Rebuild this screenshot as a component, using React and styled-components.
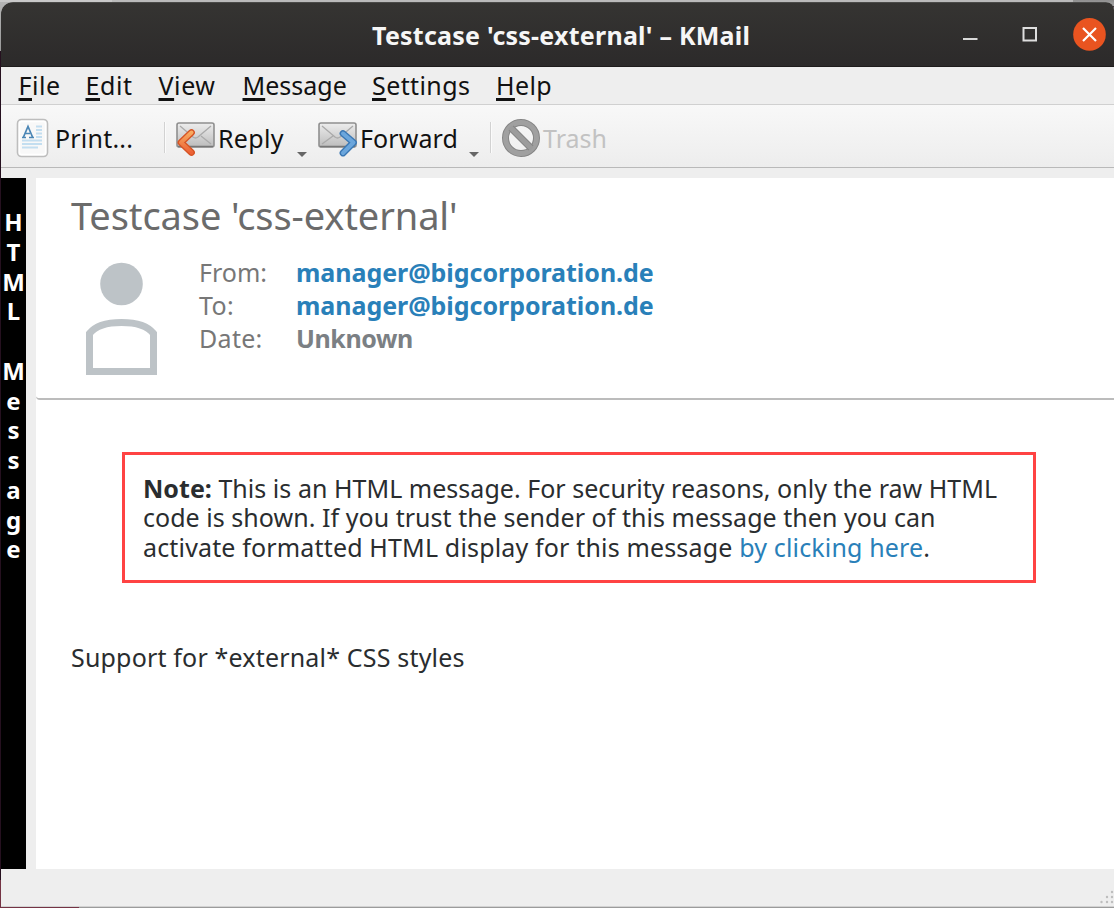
import React from "react";
import styled, { createGlobalStyle } from "styled-components";

const Global = createGlobalStyle`
  * { box-sizing: border-box; }
  body { margin: 0; background: #25101f; overflow: hidden; }
`;

const Desktop = styled.div`
  width: 1114px;
  height: 908px;
  padding: 2px 0 0 1px;
  overflow: hidden;
  font: 25px "Noto Sans", "Open Sans", sans-serif;
  color: #111;
  background:
    linear-gradient(#c9c9c9, #c9c9c9) 0 0 / 112px 2px no-repeat,
    linear-gradient(#bababa, #bababa) 112px 0 / 961px 2px no-repeat,
    linear-gradient(#8f8f8f, #a5a5a5) 1073px 0 / 41px 6px no-repeat,
    linear-gradient(#b5b5b5, #9a9a9a) 0 0 / 14px 51px no-repeat,
    linear-gradient(#743344, #743344) 0 880px / 79px 28px no-repeat,
    linear-gradient(#9b9b9b, #9b9b9b) 79px 907px / 1035px 1px no-repeat,
    #25101f;
`;

const Window = styled.div`
  display: flex;
  flex-direction: column;
  height: 905px;
  border-radius: 12px 8px 0 0;
  overflow: hidden;
  background: #eeeeee;
  border-bottom: 1px solid #d2d2d2;
`;

const TitleBar = styled.header`
  flex: none;
  height: 65px;
  display: grid;
  grid-template-columns: 1fr auto;
  align-items: center;
  padding-right: 8px;
  background: linear-gradient(#353432, #2c2a2a);
  border-top: 1px solid #4a4a48;
  border-bottom: 1px solid #1e1c1c;
`;

const Title = styled.h1`
  margin: 0 0 0 371px;
  font-size: 25px;
  line-height: 34px;
  font-weight: 700;
  letter-spacing: ${(p) => p.$track}px;
  color: #f6f6f6;
  white-space: nowrap;
`;

const Controls = styled.div`
  display: flex;
  svg { display: block; }
`;

const MenuBar = styled.nav`
  flex: none;
  display: flex;
  height: 38px;
  padding-left: 17.5px;
  background: #eeeeee;
  border-bottom: 1px solid #d0d0d0;
`;

const MenuItem = styled.span`
  width: ${(p) => p.$width}px;
  line-height: 36px;
  letter-spacing: ${(p) => p.$track || 0}px;
  white-space: nowrap;
`;

const Mnemonic = styled.span`
  text-decoration: underline 3px;
  text-underline-offset: 2.5px;
  text-decoration-skip-ink: none;
`;

const ToolBar = styled.div`
  flex: none;
  display: flex;
  height: 63px;
  padding-left: 15px;
  background: linear-gradient(#f8f8f8, #ededed);
  border-bottom: 1px solid #b9b9b9;
`;

const ToolButton = styled.div`
  width: ${(p) => p.$width}px;
  display: flex;
  align-items: center;
  color: ${(p) => (p.$disabled ? "#c2c2c2" : "#111")};
  svg { flex: none; display: block; margin-top: 3px; }
`;

const ToolLabel = styled.span`
  line-height: 34px;
  width: ${(p) => p.$width}px;
  padding-top: 3px;
  margin-left: ${(p) => p.$gap}px;
  letter-spacing: ${(p) => p.$track || 0}px;
  white-space: nowrap;
`;

const Arrow = styled.i`
  align-self: flex-end;
  margin-bottom: 10px;
  border: 5px solid transparent;
  border-top-color: #666;
  border-bottom: 0;
`;

const Divider = styled.i`
  width: 1px;
  height: 31px;
  margin: 17px ${(p) => p.$after}px 0 0;
  background: #d2d2d2;
  box-shadow: 1px 0 #fbfbfb;
`;

const Main = styled.main`
  flex: none;
  display: flex;
  height: 691px;
  margin-top: 10px;
`;

const FormatBar = styled.aside`
  width: 25px;
  margin-right: 10px;
  padding-top: 29px;
  background: #000;
  color: #fff;
  font-weight: 700;
  font-size: 24px;
  line-height: 29.75px;
  text-align: center;
`;

const Letter = styled.div`
  height: 29.75px;
  display: flex;
  justify-content: center;
`;

const Viewer = styled.section`
  flex: 1;
  background: #fff;
`;

const MessageHeader = styled.div`
  height: 222px;
  padding: 15px 0 0 35px;
  border-bottom: 2px solid #bcbcbc;
  border-bottom-left-radius: 4px;
`;

const Subject = styled.h2`
  margin: 0;
  font-size: 38px;
  line-height: 44px;
  font-weight: 400;
  letter-spacing: ${(p) => p.$track}px;
  color: #6b6b6b;
`;

const Details = styled.div`
  display: flex;
  padding: 19px 0 0 15px;
  svg { display: block; margin-top: 6px; }
`;

const Fields = styled.dl`
  display: grid;
  grid-template-columns: 97px auto;
  grid-auto-rows: 33.2px;
  margin: 0 0 0 42px;
  line-height: 33px;
`;

const FieldName = styled.dt`
  color: #777;
  letter-spacing: ${(p) => p.$track || 0}px;
`;

const FieldValue = styled.dd`
  margin: 0;
  font-weight: 700;
  letter-spacing: ${(p) => p.$track || 0}px;
  color: ${(p) => (p.$muted ? "#7b8084" : "#2980b9")};
`;

const Notice = styled.div`
  width: 914px;
  height: 131px;
  margin: 52px 0 0 86px;
  padding: 18.5px 0 0 18px;
  border: 3px solid #ff4343;
`;

const Line = styled.div`
  height: 29.7px;
  line-height: 29.7px;
  letter-spacing: ${(p) => p.$track || 0}px;
  color: #2a2d2f;
  white-space: nowrap;
`;

const Link = styled.a`
  color: #2980b9;
`;

const Body = styled.div`
  padding: 60px 0 0 35px;
`;

const StatusBar = styled.footer`
  flex: 1;
  display: flex;
  justify-content: flex-end;
  align-items: flex-end;
  svg { display: block; }
`;

const menus = [
  ["File", 67, 0.5],
  ["Edit", 73, 0.6],
  ["View", 84, 0.6],
  ["Message", 129.5, 0],
  ["Settings", 124, 0.4],
  ["Help", 60, 0.4],
];

const PrintIcon = () => (
  <svg width="33" height="40" viewBox="0 0 33 40">
    <rect x="1.5" y="1.5" width="30" height="37" rx="4" fill="#f8f8f8" stroke="#bdbdbd" strokeWidth="1.6" />
    <rect x="3.5" y="3.5" width="26" height="33" rx="2" fill="none" stroke="#fff" strokeWidth="1.5" />
    <path d="M6 19.500h4M13 19.500h5M7.500 19L12 8.500L16.500 19M9 15.500h5" fill="none" stroke="#4b86b5" strokeWidth="1.7" />
    <path d="M20 8.500h6M20 12h6M20 15.500h6M20 19h6M6 22.500h20M6 26h20M6 29.500h16" stroke="#c3def0" strokeWidth="2" />
  </svg>
);

const Envelope = () => (
  <>
    <rect x="1" y="4" width="37" height="24" rx="2" fill="url(#paper)" stroke="#8f8f8f" strokeWidth="1.6" />
    <path d="M4 25L15 17M35 25L25 17M4 7l13 11q2.500 2 5 0L35 7" fill="none" stroke="#aaa" strokeWidth="1.3" />
    <path d="M2 27.500h35" stroke="#777" strokeWidth="1.3" />
    <defs>
      <linearGradient id="paper" x2="0" y2="1"><stop stopColor="#ededed" /><stop offset="1" stopColor="#bcbcbc" /></linearGradient>
      <linearGradient id="ember" x2="0" y2="1"><stop stopColor="#f8a95f" /><stop offset="1" stopColor="#ec6236" /></linearGradient>
    </defs>
  </>
);

const ReplyIcon = () => (
  <svg width="40" height="38" viewBox="0 0 40 38">
    <Envelope />
    <path d="M15.500 13.500L5 23.500L15.500 33.500" fill="none" stroke="#d65425" strokeWidth="6.800" strokeLinecap="round" strokeLinejoin="round" />
    <path d="M15.500 13.500L5 23.500L15.500 33.500" fill="none" stroke="url(#ember)" strokeWidth="4" strokeLinecap="round" strokeLinejoin="round" />
  </svg>
);

const ForwardIcon = () => (
  <svg width="40" height="38" viewBox="0 0 40 38">
    <Envelope />
    <path d="M25 14.500L35.500 23.500L25 34" fill="none" stroke="#3b78b4" strokeWidth="6.800" strokeLinecap="round" strokeLinejoin="round" />
    <path d="M25 14.500L35.500 23.500L25 34" fill="none" stroke="#6ba6dc" strokeWidth="4" strokeLinecap="round" strokeLinejoin="round" />
  </svg>
);

const TrashIcon = () => (
  <svg width="40" height="40" viewBox="0 0 40 40">
    <circle cx="20" cy="20" r="15.500" fill="none" stroke="#858585" strokeWidth="7" />
    <circle cx="20" cy="20" r="15.500" fill="none" stroke="#a0a0a0" strokeWidth="5" />
    <path d="M10 10L30 30" stroke="#858585" strokeWidth="7" />
    <path d="M9 9L31 31" stroke="#9c9c9c" strokeWidth="5" />
  </svg>
);

const Avatar = () => (
  <svg width="71" height="114" viewBox="0 0 71 114">
    <circle cx="35.500" cy="22" r="21.300" fill="#bdc3c7" />
    <path d="M3.500 109.500V71.500Q12 60.500 35.500 60.500T67.500 71.500V109.500Z" fill="none" stroke="#bdc3c7" strokeWidth="7" />
  </svg>
);

export default function App() {
  return (
    <Desktop>
      <Global />
      <Window>
        <TitleBar>
          <Title $track={0.24}>Testcase 'css-external' – KMail</Title>
          <Controls>
            <svg width="145" height="34" viewBox="961 17 145 34">
              <path d="M963 38h14.500" stroke="#d9d9d9" strokeWidth="2" />
              <rect x="1023.500" y="27" width="12.500" height="12.500" fill="none" stroke="#dedede" strokeWidth="2" />
              <circle cx="1089.500" cy="33.400" r="16.300" fill="#e95420" />
              <path d="M1083 27l13 13M1096 27l-13 13" stroke="#fff" strokeWidth="2.200" />
            </svg>
          </Controls>
        </TitleBar>
        <MenuBar>
          {menus.map(([name, width, track]) => (
            <MenuItem key={name} $width={width} $track={track}>
              <Mnemonic>{name[0]}</Mnemonic>{name.slice(1)}
            </MenuItem>
          ))}
        </MenuBar>
        <ToolBar>
          <ToolButton $width={148}>
            <PrintIcon />
            <ToolLabel $gap={6} $track={0.2}>Print...</ToolLabel>
          </ToolButton>
          <Divider $after={11} />
          <ToolButton $width={142}>
            <ReplyIcon />
            <ToolLabel $gap={2} $width={79} $track={0.3}>Reply</ToolLabel>
            <Arrow />
          </ToolButton>
          <ToolButton $width={172}>
            <ForwardIcon />
            <ToolLabel $gap={2} $width={109} $track={0.1}>Forward</ToolLabel>
            <Arrow />
          </ToolButton>
          <Divider $after={10} />
          <ToolButton $width={110} $disabled>
            <TrashIcon />
            <ToolLabel $gap={2}>Trash</ToolLabel>
          </ToolButton>
        </ToolBar>
        <Main>
          <FormatBar>
            {[..."HTML Message"].map((c, i) => <Letter key={i}>{c}</Letter>)}
          </FormatBar>
          <Viewer>
            <MessageHeader>
              <Subject $track={-0.1}>Testcase 'css-external'</Subject>
              <Details>
                <Avatar />
                <Fields>
                  <FieldName>From:</FieldName>
                  <FieldValue $track={-0.04}>manager@bigcorporation.de</FieldValue>
                  <FieldName $track={0.4}>To:</FieldName>
                  <FieldValue $track={-0.04}>manager@bigcorporation.de</FieldValue>
                  <FieldName $track={0.3}>Date:</FieldName>
                  <FieldValue $muted $track={-0.4}>Unknown</FieldValue>
                </Fields>
              </Details>
            </MessageHeader>
            <Notice>
              <Line $track={0.03}><b>Note:</b> This is an HTML message. For security reasons, only the raw HTML</Line>
              <Line $track={0.04}>code is shown. If you trust the sender of this message then you can</Line>
              <Line $track={0.16}>activate formatted HTML display for this message <Link>by clicking here</Link>.</Line>
            </Notice>
            <Body>
              <Line $track={0.18}>Support for *external* CSS styles</Line>
            </Body>
          </Viewer>
        </Main>
        <StatusBar>
          <svg width="14" height="16" viewBox="0 0 14 16" fill="#bdbdbd">
            <circle cx="12" cy="2" r="1.200" />
            <circle cx="7" cy="7" r="1.200" /><circle cx="12" cy="7" r="1.200" />
            <circle cx="1.500" cy="12" r="1.200" /><circle cx="7" cy="12" r="1.200" /><circle cx="12" cy="12" r="1.200" />
          </svg>
        </StatusBar>
      </Window>
    </Desktop>
  );
}
